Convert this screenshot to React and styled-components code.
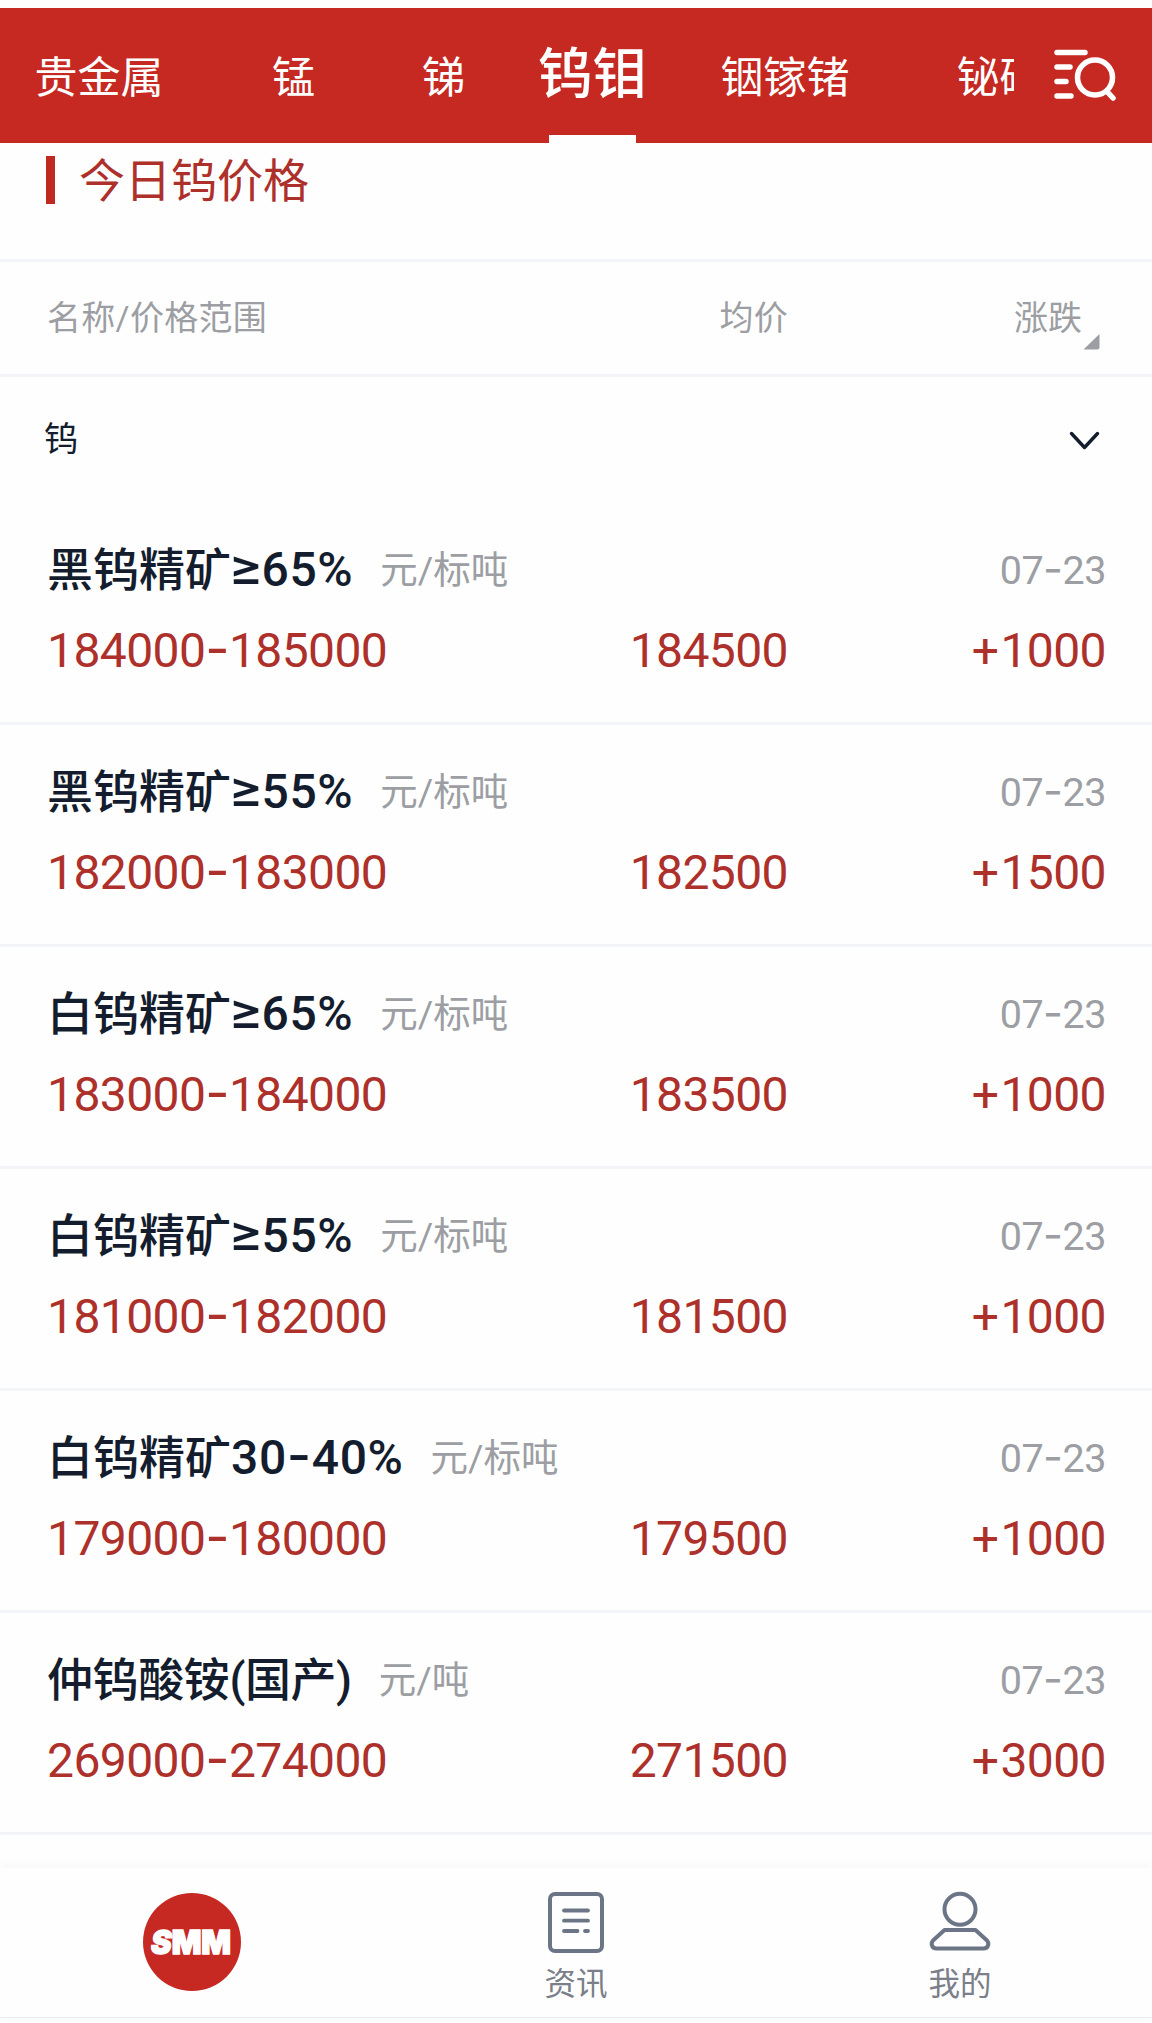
import React from "react";
import styled, { createGlobalStyle } from "styled-components";

const GlobalStyle = createGlobalStyle`
  * { box-sizing: border-box; }
  body {
    margin: 0;
    background: #fefefe;
    font-family: Roboto, "Noto Sans CJK SC", sans-serif;
    -webkit-font-smoothing: antialiased;
  }
`;

const Screen = styled.div`
  width: 1152px;
  height: 2023px;
  padding-top: 8px;
  display: flex;
  flex-direction: column;
  overflow: hidden;
  background: #fefefe;
`;

const TopBar = styled.header`
  height: 135px;
  flex: none;
  display: flex;
  background: #c52922;
`;

const TabStrip = styled.nav`
  width: 1014px;
  flex: none;
  display: flex;
  overflow: hidden;
`;

const Tab = styled.div`
  width: ${(p) => p.$width}px;
  height: 135px;
  flex: none;
  margin-left: ${(p) => p.$shift || 0}px;
  display: flex;
  flex-direction: column;
  align-items: center;
  justify-content: space-between;
  color: #fff;
  font-size: ${(p) => (p.$active ? 54.5 : 43)}px;
  font-weight: ${(p) => (p.$active ? 500 : 400)};
  line-height: ${(p) => (p.$active ? 133 : 140)}px;
  white-space: nowrap;
`;

const TabLabel = styled.span`
  height: 127px;
`;

const Indicator = styled.i`
  width: 87px;
  height: 8px;
  background: #fefefe;
`;

const SearchButton = styled.div`
  flex: 1;
  padding: 37px 0 0 37px;
`;

const SectionTitle = styled.h1`
  margin: 0;
  height: 119px;
  flex: none;
  padding: 13px 0 0 46px;
  display: flex;
  align-items: flex-start;
  gap: 24px;
  border-bottom: 3px solid #f3f4f8;
  color: #ad302b;
  font-size: 46px;
  font-weight: 400;
  line-height: 50px;
`;

const TitleMark = styled.i`
  width: 9px;
  height: 48px;
  background: #c02822;
`;

const Columns = styled.div`
  display: grid;
  grid-template-columns: 442px 299px 1fr;
  align-items: center;
`;

const TableHead = styled(Columns)`
  height: 115px;
  flex: none;
  padding: 0 52px 5px 47px;
  border-bottom: 3px solid #f3f4f8;
  color: #9c9ea3;
  font-size: 34px;
`;

const HeadCell = styled.div`
  letter-spacing: 0.3px;
  text-align: ${(p) => p.$align || "left"};
`;

const SortCell = styled.div`
  display: flex;
  justify-content: flex-end;
  align-items: center;
  gap: 1px;
`;

const SortMark = styled.svg`
  margin-top: 52px;
`;

const GroupHead = styled.div`
  height: 126px;
  flex: none;
  padding: 0 52px 7px 44px;
  display: flex;
  justify-content: space-between;
  align-items: center;
  color: #141d2d;
  font-size: 34px;
`;

const Chevron = styled.svg`
  margin-top: 6px;
`;

const PriceRow = styled.section`
  height: 222px;
  flex: none;
  padding: 32px 46px 0 47px;
  border-bottom: 3px solid #f3f4f8;
`;

const NameLine = styled.div`
  height: 71px;
  display: flex;
  align-items: flex-start;
  line-height: 70px;
`;

const Name = styled.span`
  color: #141d2d;
  font-size: 46px;
  font-weight: 500;
  letter-spacing: ${(p) => (p.$tight ? -0.4 : 0)}px;
`;

const Digits = styled.span`
  font-size: 48px;
  line-height: 0;
  letter-spacing: 0.6px;
`;

const Unit = styled.span`
  margin-left: 27px;
  color: #9c9ea3;
  font-size: 37.5px;
  line-height: 71px;
`;

const DateText = styled.span`
  margin-left: auto;
  color: #9c9ea3;
  font-size: 39.5px;
  line-height: 71px;
  letter-spacing: -0.5px;
`;

const Glyph = styled.span`
  margin: 0 ${(p) => p.$trim}px;
  font-family: Inter, sans-serif;
  font-size: ${(p) => p.$scale}em;
  line-height: 0;
`;

const PriceLine = styled(Columns)`
  height: 90px;
  color: #ad302b;
  font-size: 48px;
  line-height: 90px;
  letter-spacing: -0.6px;
`;

const Price = styled.span`
  text-align: ${(p) => p.$align || "left"};
`;

const Sign = styled.span`
  letter-spacing: 1.5px;
`;

const TabBar = styled.footer`
  height: 150px;
  margin-top: 33px;
  flex: none;
  display: grid;
  grid-template-columns: repeat(3, 384px);
  border-bottom: 1px solid #e9eaec;
  box-shadow: 0 -2px 10px rgba(0, 0, 0, 0.035);
`;

const NavItem = styled.div`
  padding-top: ${(p) => p.$top}px;
  display: flex;
  flex-direction: column;
  align-items: center;
  color: #7b7f89;
  font-size: 31.5px;
  line-height: 40px;
`;

const NavIcon = styled.svg`
  display: block;
  margin-bottom: 9px;
`;

const Logo = styled.div`
  width: 98px;
  height: 98px;
  border-radius: 50%;
  background: #c52922;
`;

const tabs = [
  { label: "贵金属", width: 238, shift: -20 },
  { label: "锰", width: 151 },
  { label: "锑", width: 149 },
  { label: "钨钼", width: 149, active: true },
  { label: "铟镓锗", width: 236 },
  { label: "铋硒碲", width: 236 },
];

const rows = [
  { name: "黑钨精矿", grade: "≥65%", unit: "元/标吨", range: "184000-185000", avg: "184500", change: "1000" },
  { name: "黑钨精矿", grade: "≥55%", unit: "元/标吨", range: "182000-183000", avg: "182500", change: "1500" },
  { name: "白钨精矿", grade: "≥65%", unit: "元/标吨", range: "183000-184000", avg: "183500", change: "1000" },
  { name: "白钨精矿", grade: "≥55%", unit: "元/标吨", range: "181000-182000", avg: "181500", change: "1000" },
  { name: "白钨精矿", grade: "30-40%", unit: "元/标吨", range: "179000-180000", avg: "179500", change: "1000" },
  { name: "仲钨酸铵(国产)", grade: "", unit: "元/吨", range: "269000-274000", avg: "271500", change: "3000" },
];

const symbols = {
  "-": { scale: 1.1, trim: 0 },
  "≥": { scale: 1.08, trim: -2.3 },
};

function Figures({ text }) {
  return text.split(/([-≥])/).map((part, i) =>
    symbols[part] ? (
      <Glyph key={i} $scale={symbols[part].scale} $trim={symbols[part].trim}>
        {part}
      </Glyph>
    ) : (
      part
    )
  );
}

function SearchIcon() {
  return (
    <svg width="68" height="60" viewBox="0 0 68 60" fill="none" stroke="#fff" strokeWidth="5.500" strokeLinecap="round">
      <path d="M6 7.500H34M6 22H19M6 36.500H15M6 51H20" />
      <circle cx="44" cy="32.500" r="17.500" />
      <path d="M56 46.500L62 53" />
    </svg>
  );
}

export default function App() {
  return (
    <>
      <GlobalStyle />
      <Screen>
        <TopBar>
          <TabStrip>
            {tabs.map((t) => (
              <Tab key={t.label} $width={t.width} $shift={t.shift} $active={t.active}>
                <TabLabel>{t.label}</TabLabel>
                {t.active && <Indicator />}
              </Tab>
            ))}
          </TabStrip>
          <SearchButton>
            <SearchIcon />
          </SearchButton>
        </TopBar>

        <SectionTitle>
          <TitleMark />
          今日钨价格
        </SectionTitle>

        <TableHead>
          <HeadCell>名称/价格范围</HeadCell>
          <HeadCell $align="right">均价</HeadCell>
          <SortCell>
            涨跌
            <SortMark width="17" height="16" viewBox="0 0 17 16">
              <path d="M16.500 0V13Q16.500 15.500 14 15.500H0.500Z" fill="#9c9ea3" />
            </SortMark>
          </SortCell>
        </TableHead>

        <GroupHead>
          钨
          <Chevron width="32" height="22" viewBox="0 0 32 22" fill="none" stroke="#141d2d" strokeWidth="3.400" strokeLinecap="round" strokeLinejoin="round">
            <path d="M3.500 4.500L16.500 18.500L29.500 4.500" />
          </Chevron>
        </GroupHead>

        {rows.map((r) => (
          <PriceRow key={r.range}>
            <NameLine>
              <Name $tight={!r.grade}>
                {r.name}
                {r.grade && (
                  <Digits>
                    <Figures text={r.grade} />
                  </Digits>
                )}
              </Name>
              <Unit>{r.unit}</Unit>
              <DateText>
                <Figures text="07-23" />
              </DateText>
            </NameLine>
            <PriceLine>
              <Price>
                <Figures text={r.range} />
              </Price>
              <Price $align="right">{r.avg}</Price>
              <Price $align="right">
                <Sign>+</Sign>
                {r.change}
              </Price>
            </PriceLine>
          </PriceRow>
        ))}

        <TabBar>
          <NavItem $top={25}>
            <Logo>
              <svg width="98" height="98" viewBox="0 0 98 98">
                <text
                  x="8"
                  y="61"
                  textLength="80"
                  lengthAdjust="spacingAndGlyphs"
                  fill="#fff"
                  stroke="#fff"
                  strokeWidth="1.500"
                  fontFamily="Inter, sans-serif"
                  fontWeight="900"
                  fontSize="33"
                >
                  <tspan fontStyle="italic">S</tspan>MM
                </text>
              </svg>
            </Logo>
          </NavItem>
          <NavItem $top={22}>
            <NavIcon width="64" height="66" viewBox="0 0 64 66" fill="none" stroke="#6b7585" strokeWidth="4">
              <rect x="6" y="4" width="52" height="57" rx="5" />
              <path d="M20 20.500H44M20 30.700H44M20 41H33.500M41 41H44" strokeLinecap="round" strokeWidth="3.800" />
            </NavIcon>
            资讯
          </NavItem>
          <NavItem $top={22}>
            <NavIcon width="64" height="66" viewBox="0 0 64 66" fill="none" stroke="#6b7585" strokeWidth="4" strokeLinejoin="round">
              <ellipse cx="32" cy="19.300" rx="15.500" ry="15.500" />
              <path d="M16.500 40H47.500L59 50.500Q61 53 60 55.500Q59 58.500 55.500 58.500H8.500Q5 58.500 4 55.500Q3 53 5 50.500Z" />
            </NavIcon>
            我的
          </NavItem>
        </TabBar>
      </Screen>
    </>
  );
}
